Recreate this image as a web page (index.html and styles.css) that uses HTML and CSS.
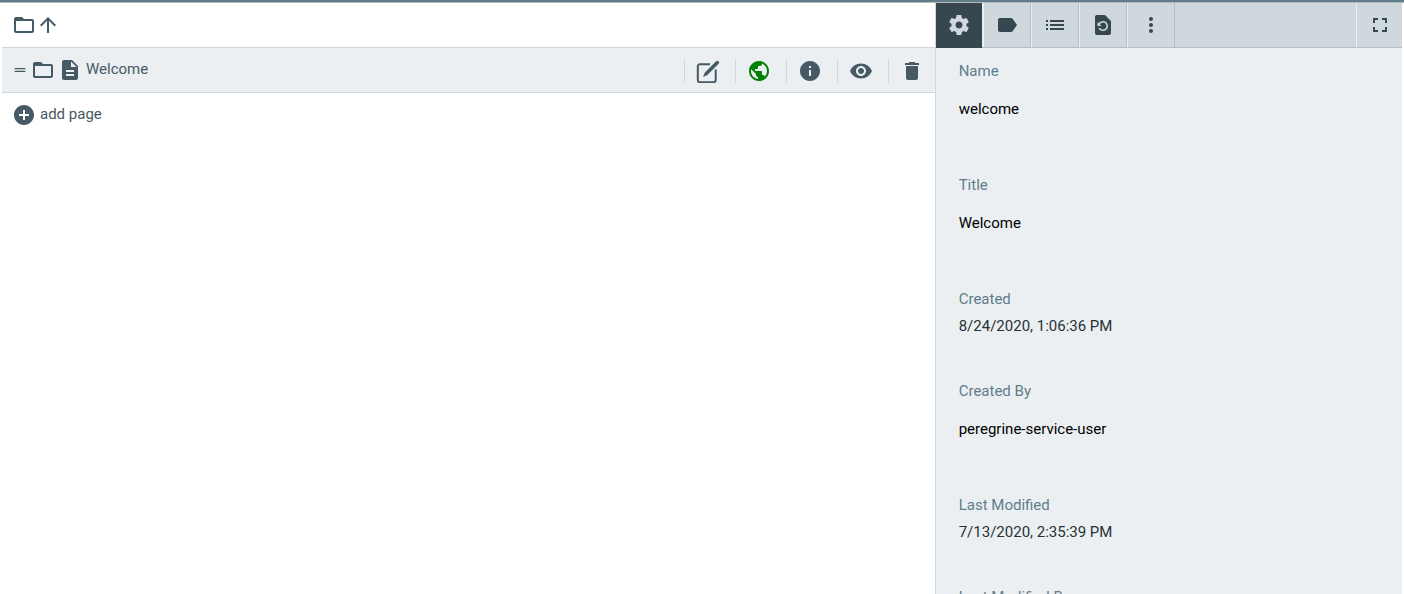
FILE: index.html
```html
<!DOCTYPE html>
<html lang="en">

<head>
    <meta charset="UTF-8">
    <meta name="viewport" content="width=device-width, initial-scale=1.0">
    <title>Pages</title>
    <link rel="stylesheet" href="styles.css">
</head>

<body>
    <div class="container">
        <main class="explorer">
            <nav class="breadcrumb">
                <a href="#" class="icon-link" aria-label="Parent folder">
                    <svg class="icon" viewBox="0 0 24 24"><path d="M20 6h-8l-2-2H4c-1.1 0-1.99.9-1.99 2L2 18c0 1.1.9 2 2 2h16c1.1 0 2-.9 2-2V8c0-1.1-.9-2-2-2zm0 12H4V8h16v10z"/></svg>
                    <svg class="icon" viewBox="0 0 24 24"><path d="M4 12l1.41 1.41L11 7.83V20h2V7.83l5.58 5.59L20 12l-8-8-8 8z"/></svg>
                </a>
            </nav>
            <div class="page-row">
                <span class="drag-handle">
                    <svg class="icon-small" viewBox="0 0 24 24"><path d="M20 9H4v2h16V9zM4 15h16v-2H4v2z"/></svg>
                </span>
                <a href="#" class="icon-link" aria-label="Open folder">
                    <svg class="icon" viewBox="0 0 24 24"><path d="M20 6h-8l-2-2H4c-1.1 0-1.99.9-1.99 2L2 18c0 1.1.9 2 2 2h16c1.1 0 2-.9 2-2V8c0-1.1-.9-2-2-2zm0 12H4V8h16v10z"/></svg>
                </a>
                <a href="#" class="page-link">
                    <svg class="icon" viewBox="0 0 24 24"><path d="M14 2H6c-1.1 0-1.99.9-1.99 2L4 20c0 1.1.89 2 1.99 2H18c1.1 0 2-.9 2-2V8l-6-6zm2 16H8v-2h8v2zm0-4H8v-2h8v2zm-3-5V3.5L18.5 9H13z"/></svg>
                    <span class="link-text">Welcome</span>
                </a>
                <div class="actions">
                    <button class="action" aria-label="Edit">
                        <svg class="icon" viewBox="0 0 24 24">
                            <path class="outline" d="M14 5.3H3.9c-1.2 0-2.1.9-2.1 2.1v13.7c0 1.2.9 2.1 2.1 2.1h13.7c1.2 0 2.1-.9 2.1-2.1V10.5"/>
                            <path d="M20.1 2.3c.7-.7 1.8-.7 2.5 0s.7 1.8 0 2.5L11.4 16l-4.4 1.9 1.9-4.4z"/>
                        </svg>
                    </button>
                    <button class="action published" aria-label="Published">
                        <svg class="icon" viewBox="0 0 24 24"><path d="M12 2C6.48 2 2 6.48 2 12s4.48 10 10 10 10-4.48 10-10S17.52 2 12 2zm-1 17.93c-3.95-.49-7-3.85-7-7.93 0-.62.08-1.21.21-1.79L9 15v1c0 1.1.9 2 2 2v1.93zm6.9-2.54c-.26-.81-1-1.39-1.9-1.39h-1v-3c0-.55-.45-1-1-1H8v-2h2c.55 0 1-.45 1-1V7h2c1.1 0 2-.9 2-2v-.41c2.93 1.19 5 4.06 5 7.41 0 2.08-.8 3.97-2.1 5.39z"/></svg>
                    </button>
                    <button class="action" aria-label="Info">
                        <svg class="icon" viewBox="0 0 24 24"><path d="M12 2C6.48 2 2 6.48 2 12s4.48 10 10 10 10-4.48 10-10S17.52 2 12 2zm1 15h-2v-6h2v6zm0-8h-2V7h2v2z"/></svg>
                    </button>
                    <button class="action" aria-label="Preview">
                        <svg class="icon" viewBox="0 0 24 24"><path d="M12 4.5C7 4.5 2.73 7.61 1 12c1.73 4.39 6 7.5 11 7.5s9.27-3.11 11-7.5c-1.73-4.39-6-7.5-11-7.5zM12 17c-2.76 0-5-2.24-5-5s2.24-5 5-5 5 2.24 5 5-2.24 5-5 5zm0-8c-1.66 0-3 1.34-3 3s1.34 3 3 3 3-1.34 3-3-1.34-3-3-3z"/></svg>
                    </button>
                    <button class="action" aria-label="Delete">
                        <svg class="icon" viewBox="0 0 24 24"><path d="M6 19c0 1.1.9 2 2 2h8c1.1 0 2-.9 2-2V7H6v12zM19 4h-3.5l-1-1h-5l-1 1H5v2h14V4z"/></svg>
                    </button>
                </div>
            </div>
            <div class="add-row">
                <button class="add-page">
                    <svg class="icon" viewBox="0 0 24 24"><path d="M12 2C6.48 2 2 6.48 2 12s4.48 10 10 10 10-4.48 10-10S17.52 2 12 2zm5 11h-4v4h-2v-4H7v-2h4V7h2v4h4v2z"/></svg>
                    <span class="link-text">add page</span>
                </button>
            </div>
        </main>

        <aside class="sidebar">
            <div class="tabs">
                <button class="tab active" aria-label="Properties">
                    <svg class="icon" viewBox="0 0 24 24"><path d="M19.43 12.98c.04-.32.07-.64.07-.98s-.03-.66-.07-.98l2.11-1.65c.19-.15.24-.42.12-.64l-2-3.46c-.12-.22-.39-.3-.61-.22l-2.49 1c-.52-.4-1.08-.73-1.69-.98l-.38-2.65C14.46 2.18 14.25 2 14 2h-4c-.25 0-.46.18-.49.42l-.38 2.65c-.61.25-1.17.59-1.69.98l-2.49-1c-.23-.09-.49 0-.61.22l-2 3.46c-.13.22-.07.49.12.64l2.11 1.65c-.04.32-.07.65-.07.98s.03.66.07.98l-2.11 1.65c-.19.15-.24.42-.12.64l2 3.46c.12.22.39.3.61.22l2.49-1c.52.4 1.08.73 1.69.98l.38 2.65c.03.24.24.42.49.42h4c.25 0 .46-.18.49-.42l.38-2.65c.61-.25 1.17-.59 1.69-.98l2.49 1c.23.09.49 0 .61-.22l2-3.46c.12-.22.07-.49-.12-.64l-2.11-1.65zM12 15.5c-1.93 0-3.5-1.57-3.5-3.5s1.57-3.5 3.5-3.5 3.5 1.57 3.5 3.5-1.57 3.5-3.5 3.5z"/></svg>
                </button>
                <button class="tab" aria-label="Tags">
                    <svg class="icon" viewBox="0 0 24 24"><path d="M17.63 5.84C17.27 5.33 16.67 5 16 5L5 5.01C3.9 5.01 3 5.9 3 7v10c0 1.1.9 1.99 2 1.99L16 19c.67 0 1.27-.33 1.63-.84L22 12l-4.37-6.16z"/></svg>
                </button>
                <button class="tab" aria-label="References">
                    <svg class="icon" viewBox="0 0 24 24"><path d="M3 13h2v-2H3v2zm0 4h2v-2H3v2zm0-8h2V7H3v2zm4 4h14v-2H7v2zm0 4h14v-2H7v2zM7 7v2h14V7H7z"/></svg>
                </button>
                <button class="tab" aria-label="Versions">
                    <svg class="icon" viewBox="0 0 24 24"><path d="M14 2H6c-1.1 0-1.99.9-1.99 2L4 20c0 1.1.89 2 1.99 2H18c1.1 0 2-.9 2-2V8l-6-6zm-2 16c-2.05 0-3.81-1.24-4.58-3h1.71c.63.9 1.68 1.5 2.87 1.5 1.93 0 3.5-1.57 3.5-3.5S13.93 9.5 12 9.5c-1.35 0-2.52.78-3.1 1.9l1.6 1.6h-4V9l1.3 1.3C8.69 8.92 10.23 8 12 8c2.76 0 5 2.24 5 5s-2.24 5-5 5z"/></svg>
                </button>
                <button class="tab" aria-label="More">
                    <svg class="icon" viewBox="0 0 24 24"><path d="M12 8c1.1 0 2-.9 2-2s-.9-2-2-2-2 .9-2 2 .9 2 2 2zm0 2c-1.1 0-2 .9-2 2s.9 2 2 2 2-.9 2-2-.9-2-2-2zm0 6c-1.1 0-2 .9-2 2s.9 2 2 2 2-.9 2-2-.9-2-2-2z"/></svg>
                </button>
                <div class="tab-spacer"></div>
                <button class="tab fullscreen" aria-label="Fullscreen">
                    <svg class="icon" viewBox="0 0 24 24"><path d="M7 14H5v5h5v-2H7v-3zm-2-4h2V7h3V5H5v5zm12 7h-3v2h5v-5h-2v3zM14 5v2h3v3h2V5h-5z"/></svg>
                </button>
            </div>
            <form class="properties">
                <div class="field">
                    <label for="name">Name</label>
                    <input id="name" type="text" value="welcome" readonly>
                </div>
                <div class="field">
                    <label for="title">Title</label>
                    <input id="title" type="text" value="Welcome" readonly>
                </div>
                <div class="field">
                    <label for="created">Created</label>
                    <output id="created">8/24/2020, 1:06:36 PM</output>
                </div>
                <div class="field">
                    <label for="createdBy">Created By</label>
                    <input id="createdBy" type="text" value="peregrine-service-user" readonly>
                </div>
                <div class="field">
                    <label for="modified">Last Modified</label>
                    <output id="modified">7/13/2020, 2:35:39 PM</output>
                </div>
                <div class="field">
                    <label for="modifiedBy">Last Modified By</label>
                    <input id="modifiedBy" type="text" value="peregrine-service-user" readonly>
                </div>
            </form>
        </aside>
    </div>
</body>

</html>
```

FILE: styles.css
```css
* {
    margin: 0;
    padding: 0;
    box-sizing: border-box;
}

body {
    height: 100vh;
    padding: 0 2px;
    overflow: hidden;
    border-top: 2px solid #607d8b;
    background-color: white;
    font-family: Roboto, sans-serif;
    font-size: 15px;
    line-height: 22px;
    color: #455a64;
    box-shadow: inset 0 1px 0 #b4b9bb;
}

a {
    color: inherit;
    text-decoration: none;
}

button {
    border: none;
    background: none;
    font: inherit;
    color: inherit;
    cursor: pointer;
}

.icon,
.icon-small {
    display: block;
    flex: none;
    width: 24px;
    height: 24px;
    fill: currentColor;
}

.icon-small {
    width: 16px;
    height: 16px;
}

.outline {
    fill: none;
    stroke: currentColor;
    stroke-width: 2;
}

.container {
    display: flex;
    height: 100%;
    padding-top: 1px;
}

/* page list */

.explorer {
    flex: 2;
    min-width: 0;
}

.breadcrumb,
.page-row,
.add-row {
    display: flex;
    align-items: center;
    height: 45px;
    padding-left: 10px;
}

.breadcrumb,
.page-row {
    border-bottom: 1px solid #cfd8dc;
}

.page-row {
    background-color: #eceff1;
}

.add-row {
    height: 43px;
}

.icon-link,
.page-link,
.add-page {
    display: flex;
    align-items: center;
}

.drag-handle {
    margin-right: 3px;
}

.page-link {
    margin-left: 3px;
}

.link-text {
    padding: 0 0 2px 4px;
}

.actions {
    display: flex;
    gap: 4px;
    margin-left: auto;
    padding-top: 2px;
}

.action {
    padding: 0 11px;
    border-left: 1px solid #cfd8dc;
}

.published {
    color: green;
}

/* sidebar */

.sidebar {
    flex: 1;
    min-width: 0;
    overflow: hidden;
    border-left: 1px solid #cfd8dc;
    background-color: #eceff1;
}

.tabs {
    display: flex;
    height: 45px;
    color: #37474f;
}

.tab {
    display: flex;
    align-items: center;
    justify-content: center;
    width: 48px;
    background-color: #cfd8dc;
    border: 1px solid #b0bec5;
    border-top: none;
    border-left-color: #eceff1;
}

.tab.active {
    width: 47px;
    background-color: #37474f;
    color: #cfd8dc;
    border-left: none;
    border-right-color: #eceff1;
    border-bottom-color: #37474f;
}

.tab.fullscreen {
    width: 46px;
    border-right: none;
}

.tab-spacer {
    flex: 1;
    background-color: #cfd8dc;
    border-bottom: 1px solid #b0bec5;
}

.properties {
    padding: 12px 23px;
}

.field {
    display: flex;
    flex-direction: column;
    gap: 5px;
    margin-bottom: 43px;
}

.field label {
    color: #607d8b;
}

.field input {
    height: 44px;
    border: none;
    background: none;
    font: inherit;
    color: black;
    outline: none;
}

.field output {
    color: #263238;
}
```
